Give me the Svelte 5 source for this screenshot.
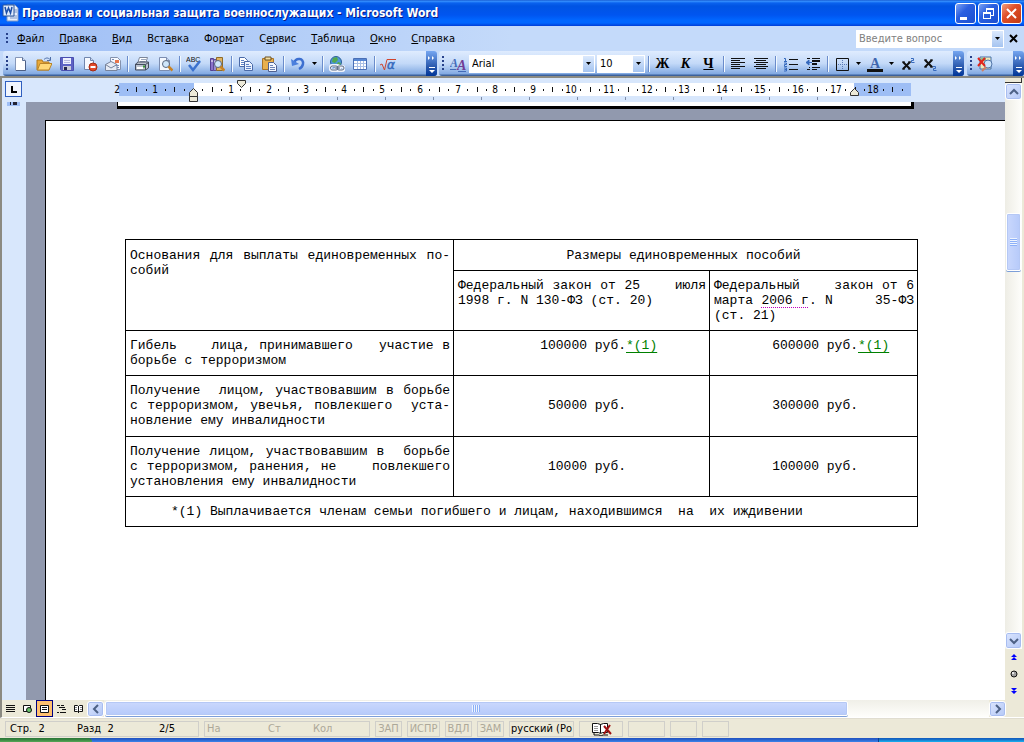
<script>
  const svg = (body, w = 16, h = 16) =>
    `<svg width="${w}" height="${h}" viewBox="0 0 ${w} ${h}" aria-hidden="true">${body}</svg>`;

  const sheet = '<path d="M2.500 1.500h7l3 3v10h-10z" fill="#f4f8ff" stroke="#7c8db0"/><path d="M9.500 1.500v3h3" fill="#c5d4ee" stroke="#7c8db0"/>';
  const lens = '<circle cx="9" cy="8" r="3.500" fill="#cfe6fb" stroke="#59677f"/><path d="M11.500 10.500l4 4" stroke="#c98325" stroke-width="2.500"/>';

  const icons = {
    word: svg('<path d="M5 1h8l3 3v13H5z" fill="#e8effb" stroke="#7d97c7"/><path d="M12 6h3M12 8h3M8 12h7M8 14h7" stroke="#7d97c7"/><path d="M1 1h11v11H1z" fill="#dfeafc" stroke="#2b579a"/><path d="M3 3l1.500 6 2-5 2 5L10 3" fill="none" stroke="#1d4fa8" stroke-width="1.500"/>', 17, 18),
    blank: svg('<path d="M2.500 1.500h7l3 3v10h-10z" fill="#fff" stroke="#8596b8"/><path d="M9.500 1.500v3h3" fill="#cbd8ee" stroke="#5f7399"/><path d="M12.500 5v9.500H3" fill="none" stroke="#4c5f85"/>'),
    open: svg('<path d="M1 4h5l1 2h6v8H1z" fill="#e9a93a" stroke="#b07a1f"/><path d="M1.500 14L4 7.500h12L13 14z" fill="#ffd978" stroke="#b98428"/><path d="M8 3.500c2-2 4-2 6 0M14.500 1v3.500H11" fill="none" stroke="#4e6ea8"/>'),
    save: svg('<path d="M1.500 1.500h13v13h-12l-1-1z" fill="#5d62c4" stroke="#4a4fb0"/><path d="M4 2h8v6H4z" fill="#eef0ff"/><path d="M5 4.500h6M5 6.500h6" stroke="#b5b8e0"/><path d="M4 10h8v4H4z" fill="#c9cad8"/><path d="M5 11h3v3H5z" fill="#22254f"/>'),
    permission: svg('<path d="M2.500 1.500h6l3 3v9h-9z" fill="#f6f9ff" stroke="#7186ad"/><path d="M8.500 1.500v3h3" fill="#cbd8ee" stroke="#7186ad"/><circle cx="11" cy="11" r="4" fill="#e2492a" stroke="#a52a12"/><path d="M8.500 11h5" stroke="#fff" stroke-width="2"/>'),
    mail: svg('<path d="M5.500 1.500h7l3 3v9h-10z" fill="#f6f9ff" stroke="#8592ad"/><path d="M10 4h4v3h-4z" fill="#e8744a"/><path d="M.500 8.500L6 5.500l6 3v6H.500z" fill="#e6ebf5" stroke="#77839b"/><path d="M.500 8.500L6 12l6-3.500" fill="none" stroke="#77839b"/><path d="M7 3.500h2M10 9.500h4M12 11.500h2" stroke="#7b8db3"/>'),
    print: svg('<path d="M5.500 1.500h8l-2 6h-8z" fill="#fff" stroke="#7c8699"/><path d="M7 3.500h5M6 5.500h5" stroke="#9aa7bd"/><path d="M1.500 8l3-2h10v6l-3 2h-10z" fill="#bcc3cf" stroke="#444d5e"/><path d="M1.500 8.500h10V14M11.500 8.500l3-2" stroke="#444d5e" fill="none"/><path d="M3 12h6" stroke="#fff" stroke-width="2"/><path d="M9 10.500h2" stroke="#3a9a32" stroke-width="2"/>'),
    preview: svg(sheet + lens),
    spell: svg('<text x="0" y="6" font-family="Liberation Sans" font-size="7" fill="#111">ABC</text><path d="M3 9l4 5 7-9" fill="none" stroke="#3c72ce" stroke-width="2.500"/>'),
    research: svg('<path d="M1.500 2.500h3v12h-3z" fill="#8a71c9" stroke="#544090"/><path d="M4.500 3.500h3v11h-3z" fill="#9a8bd0" stroke="#5c4d98"/><path d="M7.500 1.500h6v13h-6z" fill="#dfb464" stroke="#8e6b28"/><path d="M2 5h2M5 6h2" stroke="#fff"/>' + lens),
    copy: svg('<path d="M1.500 1.500h5l3 3v6h-8z" fill="#fff" stroke="#4a6aa8"/><path d="M3 4.500h3M3 6.500h4M3 8.500h4" stroke="#5e82c5"/><path d="M6.500 5.500h5l3 3v6h-8z" fill="#eaf2ff" stroke="#4a6aa8"/><path d="M8 8.500h3M8 10.500h5M8 12.500h5" stroke="#5e82c5"/>'),
    paste: svg('<path d="M1.500 2.500h11v11h-11z" fill="#e9b04e" stroke="#a8752a"/><path d="M4 1h6v3H4z" fill="#f3dfa4" stroke="#6a5120"/><path d="M7.500 6.500h5l3 3v6h-8z" fill="#f3f7ff" stroke="#4f6190"/><path d="M9 9.500h3M9 11.500h5M9 13.500h5" stroke="#6b83b5"/>'),
    undo: svg('<path d="M4 7c2-6 10-5 9 1-.500 3-2 4-4 5" fill="none" stroke="#3c6fd0" stroke-width="2.500"/><path d="M1 3l1 7 7-2z" fill="#4c80dd"/>'),
    link: svg('<circle cx="7" cy="6" r="5.500" fill="#4f97d8" stroke="#2d609a"/><path d="M4 2l4-1 1 3-3 3-3-1zM9 6l3 1-2 4-3-1z" fill="#52a94d"/><path d="M3 9.500h5a2 2 0 010 5H4a2 2 0 01-1-5zM9 10.500h4a2 2 0 010 4H9a2 2 0 010-4z" fill="none" stroke="#eef2fa" stroke-width="3"/><path d="M3 10h4a2 2 0 010 4H4a2 2 0 01-1-4zM10 10h3a2 2 0 010 4h-3a2 2 0 010-4zM6 12h5" fill="none" stroke="#5c6b85"/>'),
    grid: svg('<path d="M1.500 2.500h13v11h-13z" fill="#fff" stroke="#4a6fb5"/><path d="M2 3h12v2H2z" fill="#5686d3"/><path d="M2 7.500h12M2 10.500h12M5.500 5v8M8.500 5v8M11.500 5v8" stroke="#a9bfe6"/>'),
    root: svg('<path d="M0 9l2-1 2.500 6L7 3.500h9" fill="none" stroke="#d0442c"/><text x="7" y="13" font-family="DejaVu Sans" font-style="italic" font-size="12" fill="#3569bd" stroke="#3569bd" stroke-width=".5">α</text>', 17),
    styles: svg('<text x="0" y="11" font-family="Liberation Serif" font-style="italic" font-weight="700" font-size="12" fill="#426bb8">A</text><text x="7" y="14" font-family="Liberation Serif" font-style="italic" font-weight="700" font-size="14" fill="#713d96">A</text><path d="M0 13.500h6M8 15.500h8" stroke="#426bb8"/>'),
    left: svg('<path d="M1 2.500h14M1 4.500h9M1 6.500h14M1 8.500h9M1 10.500h14M1 12.500h9" stroke="#111"/>'),
    center: svg('<path d="M1 2.500h14M3 4.500h10M1 6.500h14M3 8.500h10M1 10.500h14M3 12.500h10" stroke="#111"/>'),
    numbers: svg('<path d="M7 3.500h9M7 8.500h9M7 13.500h9" stroke="#111"/><path d="M2 2.500h1.500V5.500M2 5.500h3M2 7h2.500v1.500H2.500V10.500H5M2 12h2.500v3H2M2.500 13.500h2" fill="none" stroke="#3569bd"/>'),
    outdent: svg('<path d="M2 2.500h3M7 2.500h8M2 13.500h3M7 13.500h5M7 11.500h8M4 11.500h1" stroke="#111"/><path d="M7 5h8M7 8h5" stroke="#111" stroke-width="2"/><path d="M7 6.500H1M4 4L1 6.500 4 9z" stroke="#3569bd" fill="#3569bd"/>'),
    borders: svg('<path d="M2.500 2.500h12v12h-12z" fill="none" stroke="#111"/><path d="M8.500 4v10M4 8.500h10" stroke="#5a79b5" stroke-dasharray="1 1"/>'),
    color: svg('<text x="3" y="12" font-family="Liberation Serif" font-weight="700" font-size="14" fill="#3f66ae">A</text><path d="M0 13h16v3H0z" fill="#111"/>'),
    sup: svg('<path d="M3 6l7 7M10 6l-7 7" stroke="#111" stroke-width="2"/><path d="M2 6h3M8 6h3M2 13h3M8 13h3" stroke="#111"/><path d="M11 2.500h2.500v2h-2v2H14.500" fill="none" stroke="#3569bd"/>'),
    sub: svg('<path d="M2 4l7 7M9 4l-7 7" stroke="#111" stroke-width="2"/><path d="M1 4h3M7 4h3M1 11h3M7 11h3" stroke="#111"/><path d="M10 10.500h2.500v2h-2v2H13.500" fill="none" stroke="#3569bd"/>'),
    review: svg('<path d="M3 2h11v12H3z" fill="#f1e7b8" stroke="#4673a8"/><path d="M4 3h5v3H4z" fill="#8bc383"/><circle cx="11" cy="9" r="4" fill="#cce3fa" stroke="#5276a9"/><path d="M9 12l-4 4" stroke="#d07f62" stroke-width="2"/><path d="M1 3l7 8M8 3l-7 8" stroke="#e0241b" stroke-width="2"/>', 17, 17),
    normal: svg('<path d="M1 1.500h9M1 3.500h9M1 5.500h9M1 7.500h9" stroke="#111"/>', 11, 10),
    web: svg('<path d="M1.500 1.500h7v6h-7z" fill="#fff" stroke="#111"/><circle cx="7" cy="6" r="2.500" fill="#67c36a" stroke="#111"/>', 11, 10),
    layout: svg('<path d="M1.500 1.500h8v7h-8z" fill="#fff" stroke="#111"/><path d="M3 3.500h5M3 5.500h5" stroke="#111"/>', 11, 10),
    outline: svg('<path d="M1 1.500h3M5 1.500h3M3 3.500h6M6 5.500h4M1 8.500h2M4 8.500h6" stroke="#111"/>', 11, 10),
    reading: svg('<path d="M1.500 1.500h3l1 1 1-1h3v6h-3l-1 1-1-1h-3zM5.500 2v7" fill="#fff" stroke="#111"/><path d="M7 3.500h2M7 5.500h2M2 3.500h2M2 5.500h2" stroke="#888"/>', 11, 10),
    book: svg('<path d="M1.500 1.500h5l3 1 3-1h4v9h-5l-2 1-2-1h-6z" fill="#fff" stroke="#111"/><path d="M9.500 2v9M3 10.500V13h5l2 1 2-1h5" stroke="#111" fill="none"/><path d="M3 4.500h4M3 6.500h4M3 8.500h4" stroke="#999"/><path d="M13 4l7 8M19 3l-6 9" stroke="#a01010" stroke-width="2"/>', 21, 15),
    minimize: svg('<path d="M4 13h7v3H4z" fill="#fff"/>', 19, 19),
    restore: svg('<path d="M7 5.500h8M7.500 5v3M14.500 5v7M12 11.500h2M4 9h8M4.500 9v6M4 14.500h8M11.500 9v6" stroke="#fff" stroke-width="1"/><path d="M7 5h8M4 9h8" stroke="#fff" stroke-width="2"/>', 19, 19),
    close: svg('<path d="M5 5l9 9M14 5l-9 9" stroke="#fff" stroke-width="2"/>', 19, 19),
    drop: svg('<path d="M0 0h5L2.500 3z" fill="#000"/>', 5, 3),
    more: svg('<path d="M0 2l2 2-2 2zM4 2l2 2-2 2z" fill="#fff"/><path d="M1 13.500h6" stroke="#fff"/><path d="M1 16h6l-3 3z" fill="#fff"/>', 8, 20),
    cross: svg('<path d="M1 1l7 7M8 1L1 8" stroke="#000" stroke-width="2"/>', 9, 9),
    up: svg('<path d="M1 6l4-4 4 4" fill="none" stroke="#4d6185" stroke-width="2"/>', 10, 8),
    down: svg('<path d="M1 2l4 4 4-4" fill="none" stroke="#4d6185" stroke-width="2"/>', 10, 8),
    back: svg('<path d="M6 1L2 5l4 4" fill="none" stroke="#4d6185" stroke-width="2"/>', 8, 10),
    forward: svg('<path d="M2 1l4 4-4 4" fill="none" stroke="#4d6185" stroke-width="2"/>', 8, 10),
    prev: svg('<path d="M3 0L0 3h6zM3 3L0 6h6z" fill="#00f"/>', 6, 6),
    ball: svg('<circle cx="4" cy="4" r="3" fill="#a0a0a0" stroke="#111"/><circle cx="3" cy="3" r="1" fill="#fff"/>', 8, 8),
    next: svg('<path d="M3 3L0 0h6zM3 6L0 3h6z" fill="#00f"/>', 6, 6)
  };

  const menus = [
    ['', 'Ф', 'айл'], ['', 'П', 'равка'], ['', 'В', 'ид'], ['Вст', 'а', 'вка'], ['Фор', 'м', 'ат'],
    ['С', 'е', 'рвис'], ['', 'Т', 'аблица'], ['', 'О', 'кно'], ['', 'С', 'правка']
  ];

  const standard = [
    ['blank', 'Создать'], ['open', 'Открыть'], ['save', 'Сохранить'], ['permission', 'Разрешения'], ['mail', 'Сообщение'], null,
    ['print', 'Печать'], ['preview', 'Предварительный просмотр'], null,
    ['spell', 'Правописание'], ['research', 'Справочные материалы'], null,
    ['copy', 'Копировать'], ['paste', 'Вставить'], null,
    ['undo', 'Отменить', true], null,
    ['link', 'Гиперссылка'], ['grid', 'Добавить таблицу'], null,
    ['root', 'Редактор формул']
  ];

  const formatting = [
    null, ['Ж', 'Полужирный'], ['К', 'Курсив'], ['Ч', 'Подчёркнутый'], null,
    ['left', 'По левому краю'], ['center', 'По центру'], null,
    ['numbers', 'Нумерация'], ['outdent', 'Уменьшить отступ'], null,
    ['borders', 'Границы', true], ['color', 'Цвет шрифта', true],
    ['sup', 'Надстрочный'], ['sub', 'Подстрочный']
  ];

  const origin = 74;
  const cm = 37.8;
  const marks = [];
  for (let q = -7; q <= 75; q++) {
    const x = origin + Math.round((q * cm) / 4);
    if (q === 0) continue;
    if (q % 4 === 0) marks.push({ x, label: Math.abs(q / 4) });
    else marks.push({ x, tall: q % 2 === 0 });
  }
  marks.push({ x: -2, label: 2 });
  const tabs = Array.from({ length: 14 }, (_, i) => 122 + i * 48).filter((x) => x < 720);

  const views = [['normal', 'Обычный'], ['web', 'Веб-документ'], ['layout', 'Разметка страницы'], ['outline', 'Структура'], ['reading', 'Чтение']];
</script>

{#snippet tools(list)}
  {#each list as item}
    {#if item === null}
      <span class="sep"></span>
    {:else}
      <button class="tool" aria-label={item[1]}>
        {#if icons[item[0]]}{@html icons[item[0]]}{:else}<b class:italic={item[0] === 'К'} class:under={item[0] === 'Ч'}>{item[0]}</b>{/if}
      </button>
      {#if item[2]}<button class="arrow" aria-label="{item[1]}: варианты">{@html icons.drop}</button>{/if}
    {/if}
  {/each}
{/snippet}

<div class="window">
  <header class="title">
    {@html icons.word}
    <h1>Правовая и социальная защита военнослужащих - Microsoft Word</h1>
    <button class="win" aria-label="Свернуть">{@html icons.minimize}</button>
    <button class="win" aria-label="Восстановить">{@html icons.restore}</button>
    <button class="win red" aria-label="Закрыть">{@html icons.close}</button>
  </header>

  <nav class="menu">
    <span class="grip"></span>
    {#each menus as [a, key, b]}
      <button>{a}<u>{key}</u>{b}</button>
    {/each}
    <div class="combo ask">
      <input aria-label="Вопрос" placeholder="Введите вопрос" />
      <button class="pick" aria-label="Список вопросов">{@html icons.drop}</button>
    </div>
    <button class="shut" aria-label="Закрыть документ">{@html icons.cross}</button>
  </nav>

  <div class="bars">
    <div class="bar first">
      <span class="grip"></span>
      {@render tools(standard)}
      <button class="more" aria-label="Параметры панели">{@html icons.more}</button>
    </div>
    <div class="bar second">
      <span class="grip"></span>
      <button class="tool" aria-label="Стили">{@html icons.styles}</button>
      <div class="combo font">
        <select aria-label="Шрифт"><option>Arial</option></select>
        <span class="pick">{@html icons.drop}</span>
      </div>
      <div class="combo size">
        <select aria-label="Размер"><option>10</option></select>
        <span class="pick">{@html icons.drop}</span>
      </div>
      {@render tools(formatting)}
      <button class="more" aria-label="Параметры панели">{@html icons.more}</button>
    </div>
    <div class="bar third">
      <span class="grip"></span>
      <button class="tool" aria-label="Рецензирование">{@html icons.review}</button>
      <button class="more" aria-label="Параметры панели">{@html icons.more}</button>
    </div>
  </div>

  <div class="work">
    <div class="main">
      <div class="ruler">
        <button class="tabstop" aria-label="Табуляция">{@html svg('<path d="M0 0h2v5h4v2H0z" fill="#000"/>', 6, 7)}</button>
        <svg class="scale" width="800" height="24" viewBox="-6 0 800 24" aria-hidden="true">
          <rect x="0" y="5" width="792" height="13" fill="#9ebef5" />
          <rect x="75" y="5" width="660" height="13" fill="#fff" />
          {#each marks as m}
            {#if m.label}
              <text x={m.x} y="15" text-anchor="middle">{m.label}</text>
            {:else}
              <rect x={m.x} y={m.tall ? 9 : 11} width="1" height={m.tall ? 5 : 2} fill="#111" />
            {/if}
          {/each}
          {#each tabs as x}<rect {x} y="19" width="1" height="3" fill="#7d8ba6" />{/each}
          <path d="M70.500 18.500v-4l4-4 4 4v4zM70.500 18.500h8v5h-8z" fill="#ece9d8" stroke="#333" />
          <path d="M118.500 2.500h8v3l-4 4-4-4z" fill="#ece9d8" stroke="#333" />
          <path d="M731.500 17.500v-3l4-4 4 4v3z" fill="#ece9d8" stroke="#333" />
        </svg>
      </div>
      <div class="canvas">
        <div class="vruler"><i></i></div>
        <div class="pages">
          <div class="tail"></div>
          <main class="page">
            <table>
              <colgroup><col class="c1" /><col class="c2" /><col class="c3" /></colgroup>
              <tbody>
                <tr class="top">
                  <th rowspan="2"><p class="full">Основания для выплаты единовременных по-</p><p>собий</p></th>
                  <th colspan="2" class="mid">Размеры единовременных пособий</th>
                </tr>
                <tr>
                  <th><p class="full">Федеральный закон от 25    июля</p><p>1998 г. N 130-ФЗ (ст. 20)</p></th>
                  <th><p class="full">Федеральный    закон от 6</p><p class="full">марта <span class="tag">2006 г</span>. N     35-ФЗ</p><p>(ст. 21)</p></th>
                </tr>
                <tr>
                  <td><p class="full">Гибель    лица, принимавшего   участие в</p><p>борьбе с терроризмом</p></td>
                  <td><span class="sum">100000 руб.</span><a href="#note">*(1)</a></td>
                  <td><span class="sum narrow">600000 руб.</span><a href="#note">*(1)</a></td>
                </tr>
                <tr class="tall">
                  <td><p class="full">Получение  лицом, участвовавшим в борьбе</p><p class="full">с терроризмом, увечья, повлекшего  уста-</p><p>новление ему инвалидности</p></td>
                  <td class="level"><span class="sum">50000 руб.</span></td>
                  <td class="level"><span class="sum narrow">300000 руб.</span></td>
                </tr>
                <tr>
                  <td><p class="full">Получение лицом, участвовавшим в  борьбе</p><p class="full">с терроризмом, ранения, не    повлекшего</p><p>установления ему инвалидности</p></td>
                  <td class="level"><span class="sum">10000 руб.</span></td>
                  <td class="level"><span class="sum narrow">100000 руб.</span></td>
                </tr>
                <tr>
                  <td colspan="3" class="note" id="note">*(1) Выплачивается членам семьи погибшего и лицам, находившимся  на  их иждивении</td>
                </tr>
              </tbody>
            </table>
          </main>
        </div>
      </div>
    </div>
    <div class="vscroll">
      <span class="split"></span>
      <button class="sb" aria-label="Вверх">{@html icons.up}</button>
      <div class="track">
        <span class="room"></span>
        <div class="thumb"><i></i></div>
      </div>
      <button class="sb" aria-label="Вниз">{@html icons.down}</button>
      <div class="browse">
        <button aria-label="Предыдущая страница">{@html icons.prev}</button>
        <button aria-label="Выбор объекта перехода">{@html icons.ball}</button>
        <button aria-label="Следующая страница">{@html icons.next}</button>
      </div>
    </div>
  </div>

  <div class="bottom">
    {#each views as [name, label]}
      <button class="view" class:on={name === 'layout'} aria-label={label}>{@html icons[name]}</button>
    {/each}
    <button class="sb" aria-label="Влево">{@html icons.back}</button>
    <div class="htrack"><div class="hthumb"><i></i></div></div>
    <button class="sb" aria-label="Вправо">{@html icons.forward}</button>
    <span class="corner"></span>
  </div>

  <footer class="status">
    <div class="pane place"><span>Стр.&nbsp; 2</span><span>Разд&nbsp; 2</span><span>2/5</span></div>
    <div class="pane pos"><span>На</span><span>Ст</span><span>Кол</span></div>
    <div class="pane off w1">ЗАП</div>
    <div class="pane off w2">ИСПР</div>
    <div class="pane off w1">ВДЛ</div>
    <div class="pane off w1">ЗАМ</div>
    <div class="pane lang">русский (Ро</div>
    <div class="pane book">{@html icons.book}</div>
    <div class="pane w3"></div>
    <div class="pane w1"></div>
    <div class="pane w1"></div>
  </footer>
  <div class="taskbar"><span class="start"></span><span class="tray"></span></div>
</div>

<style>
  :global(body) { margin: 0; }
  * { box-sizing: border-box; }
  .window :global(svg) { display: block; flex: none; }
  .window {
    min-height: 100vh;
    display: flex;
    flex-direction: column;
    background: #ece9d8;
    font: 11px/14px Tahoma, "DejaVu Sans Condensed", "DejaVu Sans", sans-serif;
    color: #000;
    overflow: hidden;
  }
  button { font: inherit; color: inherit; border: 0; padding: 0; background: none; display: flex; align-items: center; justify-content: center; }
  input, select { font: inherit; color: #000; border: 0; padding: 0 2px; margin: 0; background: #fff; min-width: 0; outline: 0; appearance: none; border-radius: 0; }
  input::placeholder { color: #808080; opacity: 1; }

  .title {
    height: 26px;
    display: flex;
    align-items: center;
    gap: 2px;
    padding: 0 2px;
    background: linear-gradient(#0a48c4 0, #3a95ff 1px, #0a62ee 3px, #0054e3 6px, #0055f0 15px, #06f 20px, #06f 23px, #003dd7 26px);
  }
  h1 { flex: 1; margin: 0 0 0 1px; font: bold 12px/20px "Trebuchet MS", "DejaVu Sans Condensed", sans-serif; color: #fff; text-shadow: 1px 1px #0a1883; white-space: nowrap; }
  .win { width: 21px; height: 21px; border: 1px solid #fff; border-radius: 3px; background: linear-gradient(135deg, #7ca3f5, #2a5fe0 40%, #1c4fd0); }
  .red { background: linear-gradient(135deg, #f0a080, #e0502a 40%, #c23a14); }

  .menu { height: 25px; display: flex; align-items: center; background: linear-gradient(90deg, #9ebef5, #c4dafa 50%); padding: 0 4px; }
  .menu > button { padding: 0 7px 0 8px; display: block; }
  .grip { width: 4px; height: 16px; margin-left: 2px; flex: none; background: repeating-linear-gradient(#27418a 0 2px, transparent 2px 4px) 0 0 / 2px 16px no-repeat; }
  .menu .grip { height: 12px; width: 3px; }
  .combo { display: flex; border: 1px solid #fff; background: #fff; height: 18px; flex: none; position: relative; }
  .combo input, .combo select { flex: 1; width: 0; }
  .pick { width: 11px; display: flex; align-items: center; justify-content: center; background: linear-gradient(#dbe9fd, #a5c4f0); flex: none; pointer-events: none; }
  .ask { width: 148px; margin-left: auto; }
  .menu .shut { width: 16px; padding: 0 0 0 5px; }

  .bars { display: flex; height: 27px; background: #c4dafa; border-bottom: 2px solid #8b8a82; }
  .bar { display: flex; align-items: center; height: 25px; background: linear-gradient(#dfecfe, #c3d9f8 50%, #81a9e2 23px, #3b619c 24px); border-radius: 3px; }
  .first { width: 434px; margin: 0 2px 0 3px; }
  .first .grip { margin-right: -1px; }
  .second { flex: 1; margin-right: 3px; }
  .third { width: 57px; }
  .bars .grip { margin-left: 3px; }
  .tool { width: 23px; height: 22px; flex: none; }
  .tool b { font: bold 14px/16px "Liberation Serif", serif; }
  .tool .italic { font-style: italic; }
  .tool .under { text-decoration: underline; }
  .arrow { width: 10px; height: 22px; flex: none; }
  .sep { width: 6px; height: 16px; flex: none; background: linear-gradient(90deg, transparent 3px, #6a8ccb 3px 4px, #f1f9ff 4px 5px, transparent 5px); }
  .more { width: 11px; height: 25px; margin-left: auto; background: linear-gradient(#75a6f1, #2d5cb0 60%, #003598); border-radius: 0 3px 3px 0; flex: none; }
  .font { width: 126px; margin-right: 2px; }
  .size { width: 48px; }

  .work { flex: 1; display: flex; }
  .main { flex: 1; min-width: 0; display: flex; flex-direction: column; border-left: 2px solid #8b8a82; }
  .ruler { height: 24px; background: #d8e7fc; display: flex; }
  .tabstop { width: 17px; height: 16px; margin: 3px 91px 0 3px; border: 1px solid #2f5fbf; background: #f1f5fd; flex: none; }
  .scale { font: 10px "DejaVu Sans Condensed", sans-serif; flex: none; }
  .canvas { flex: 1; display: flex; }
  .vruler { width: 24px; background: #d8e7fc; }
  .vruler i { display: block; width: 13px; height: 4px; margin-left: 5px; background: linear-gradient(90deg, #9ebef5 3px, #223 3px 4px, #9ebef5 4px 6px, #223 6px 10px, #9ebef5 10px) 0 0 / 13px 3px no-repeat #9ebef5; }
  .pages { flex: 1; display: flex; flex-direction: column; background: #9199ae; min-width: 0; }
  .tail { width: 797px; height: 7px; margin: 0 0 11px 91px; background: #fff; border: solid #000; border-width: 0 3px 3px 1px; }
  .page { flex: 1; margin-left: 19px; padding: 118px 0 40px 79px; background: #fff; border: solid #000; border-width: 1px 0 0 1px; }

  table { border-collapse: collapse; table-layout: fixed; width: 793px; font: 13px/15px "Courier New", "Liberation Mono", monospace; }
  .c1 { width: 328px; }
  .c2 { width: 256px; }
  .c3 { width: 208px; }
  th, td { border: 1px solid #000; padding: 7px 3px 7px 4px; text-align: left; font-weight: normal; vertical-align: top; white-space: pre-wrap; }
  .top > * { padding-top: 8px; }
  .tall > * { padding-bottom: 8px; }
  p { margin: 0; }
  .full { text-align-last: justify; }
  th.mid { text-align: center; padding-right: 8px; }
  td.level { vertical-align: middle; }
  td.note { padding-left: 45px; }
  .sum { display: inline-block; width: 168px; text-align: right; }
  .narrow { width: 144px; }
  a { color: #008000; text-decoration: underline; text-underline-offset: 3px; }
  .tag { text-decoration: underline dotted #c000c0 1px; text-underline-offset: 3px; }

  .vscroll { width: 19px; display: flex; flex-direction: column; align-items: center; padding-right: 2px; background: linear-gradient(90deg, #eeede5, #fefefb 17px, #ece9d8 17px); }
  .split { width: 17px; height: 5px; border: 1px solid #333; border-width: 0 1px 1px 0; background: #ece9d8; }
  .sb { width: 17px; height: 17px; flex: none; border: 1px solid #fff; border-radius: 3px; background: linear-gradient(135deg, #dbe5fe, #b4c8f6); box-shadow: inset 0 0 0 1px #a8bdf0; }
  .track { flex: 1; width: 17px; display: flex; flex-direction: column; }
  .room { height: 113px; }
  .thumb, .hthumb { border: 1px solid #fff; border-radius: 2px; background: linear-gradient(90deg, #cad8fd, #b6cafa); box-shadow: inset 0 0 0 1px #b5c8f5, 0 1px #7d9fd8; display: flex; align-items: center; justify-content: center; }
  .thumb { height: 58px; width: 15px; margin-left: 1px; }
  .thumb i { width: 7px; height: 8px; background: repeating-linear-gradient(#eef4fe 0 1px, #8cb0f8 1px 2px); }
  .browse { align-self: stretch; height: 51px; background: #ece9d8; display: flex; flex-direction: column; justify-content: space-around; align-items: center; padding-bottom: 1px; }

  .bottom { height: 18px; display: flex; align-items: center; border-left: 2px solid #8b8a82; border-bottom: 1px solid #fff; }
  .view { width: 17px; height: 17px; flex: none; }
  .on { background: #ffc06f; border: 1px solid #000080; }
  .bottom > .sb { height: 16px; }
  .htrack { flex: 1; height: 17px; padding: 1px 0 1px 1px; background: linear-gradient(#f0efe8, #fefefb); }
  .hthumb { height: 15px; width: 84%; background: linear-gradient(#cad8fd, #b6cafa); }
  .hthumb i { width: 8px; height: 7px; background: repeating-linear-gradient(90deg, #eef4fe 0 1px, #8cb0f8 1px 2px); }
  .corner { width: 18px; }

  .status { display: flex; gap: 5px; padding: 2px 5px 1px; height: 20px; align-items: stretch; white-space: nowrap; border-top: 1px solid #e0ddd0; }
  .pane { border: 1px solid #d0cfca; display: flex; align-items: center; justify-content: center; flex: none; overflow: hidden; }
  .place { width: 194px; display: grid; grid-template-columns: 67px 82px 1fr; padding-left: 4px; }
  .pos { width: 166px; display: grid; grid-template-columns: 61px 45px 1fr; padding-left: 2px; color: #aca899; }
  .off { color: #aca899; }
  .w1 { width: 27px; }
  .w2 { width: 33px; }
  .w3 { width: 37px; }
  .lang { width: 65px; }
  .book { width: 44px; }
  .taskbar { height: 4px; display: flex; justify-content: space-between; background: linear-gradient(#2457c4 1px, #3c85ea); }
  .start { width: 92px; background: linear-gradient(#2f7a3a 1px, #58a858); border-radius: 0 4px 0 0; }
  .tray { width: 146px; background: linear-gradient(#1460c0 1px, #18b4f0); border-left: 1px solid #0a3f90; }
</style>
